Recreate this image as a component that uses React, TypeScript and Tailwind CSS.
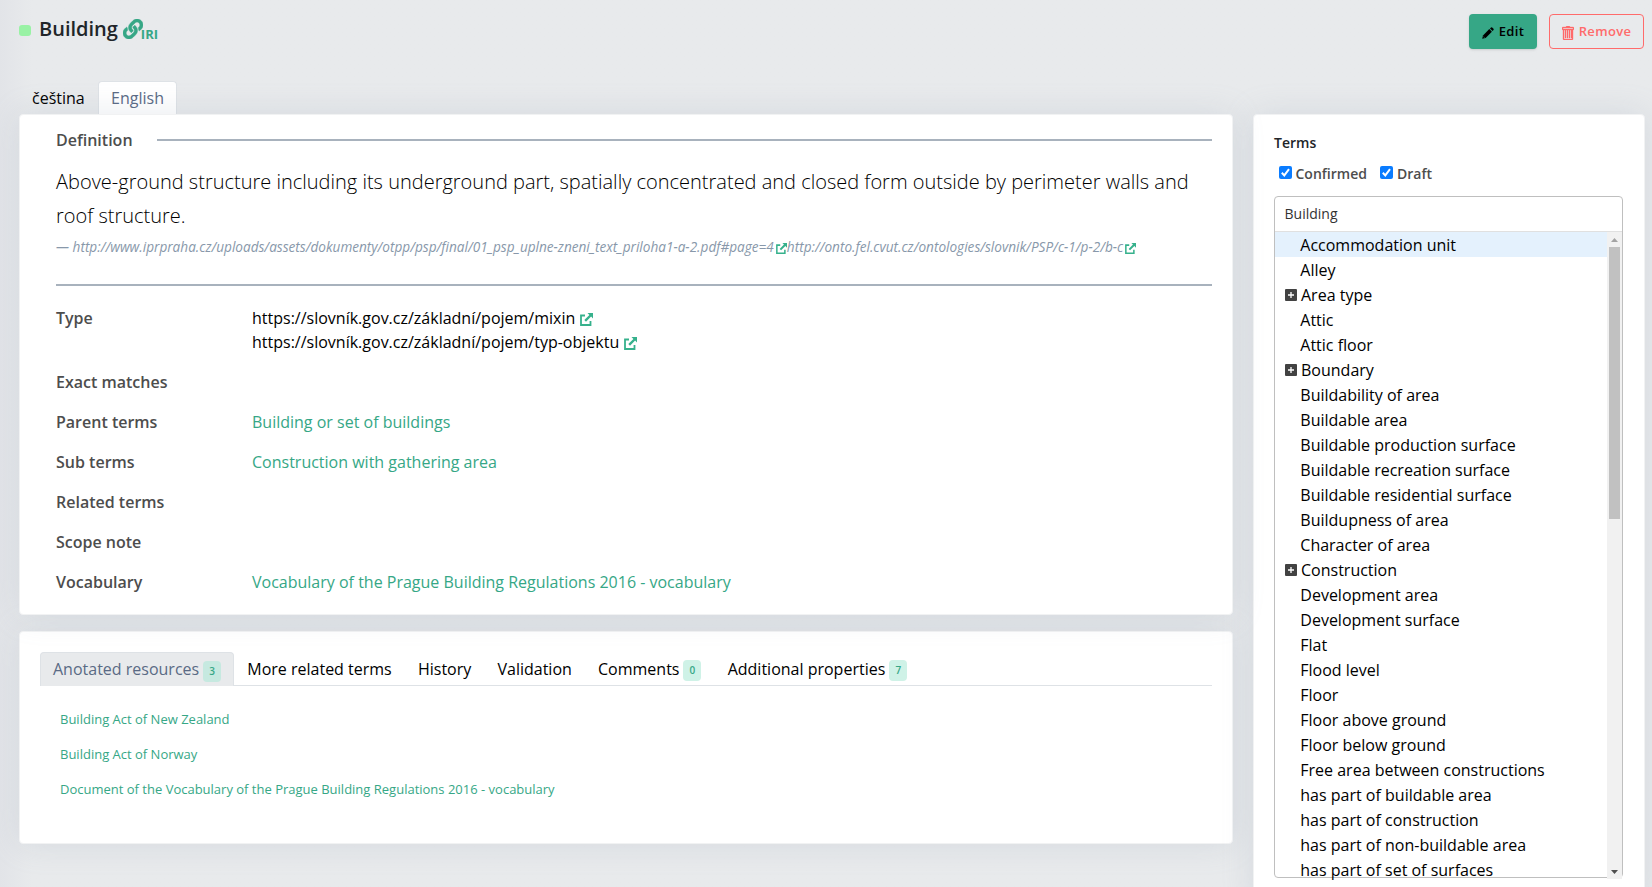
import React from "react";
import { FaLink } from "react-icons/fa";

const shadow =
  "border border-[#f1f2f3] bg-white rounded-[4px] shadow-[0_0_32px_rgba(136,152,170,0.2)]";

function External({ size = 13 }: { size?: number }) {
  return (
    <svg width={size} height={size} viewBox="0 0 13 13" className="ml-px inline-block align-[-2px]" aria-hidden="true">
      <path d="M5 2.500H1V12h9.500V8" fill="none" stroke="#36b18c" strokeWidth="1.800" />
      <path d="M7.500 0H13v5.500l-1.900-1.900L6 8.700 4.300 7 9.400 1.900z" fill="#36b18c" />
    </svg>
  );
}

function Pencil() {
  return (
    <svg width="12" height="12" viewBox="0 0 12 12" className="mt-[3px]" aria-hidden="true">
      <path fill="currentColor" d="M1 8.400 7.300 2.100 9.900 4.700 3.600 11 .2 11.800z" />
      <path fill="currentColor" d="M8 1.400 9 .500q.6-.5 1.200 0l1.300 1.300q.5.6 0 1.200l-.9 1z" />
      <path d="M1.600 9.700l.8.800" stroke="#36a786" strokeWidth=".8" />
    </svg>
  );
}

function Trash() {
  return (
    <svg width="12" height="14" viewBox="0 0 12 14" className="mt-[2px]" aria-hidden="true">
      <path
        fill="currentColor"
        stroke="currentColor"
        strokeWidth=".35"
        fillRule="evenodd"
        d="M11 1H8c0-.55-.45-1-1-1H5c-.55 0-1 .45-1 1H1c-.55 0-1 .45-1 1v1c0 .55.45 1 1 1v9c0 .55.45 1 1 1h8c.55 0 1-.45 1-1V4c.55 0 1-.45 1-1V2c0-.55-.45-1-1-1zm-1 12H2V4h1v8h1V4h1v8h1V4h1v8h1V4h1v8h1v1zm1-10H1V2h10v1z"
      />
    </svg>
  );
}

function Plus() {
  return (
    <svg width="12" height="12" viewBox="0 0 12 12" className="mr-1 shrink-0" aria-hidden="true">
      <rect width="12" height="12" rx="1" fill="#424242" />
      <path d="M6 3v6M3 6h6" stroke="#fff" strokeWidth="1.300" />
    </svg>
  );
}

const terms = [
  "Accommodation unit", "Alley", "+Area type", "Attic", "Attic floor", "+Boundary", "Buildability of area",
  "Buildable area", "Buildable production surface", "Buildable recreation surface", "Buildable residential surface",
  "Buildupness of area", "Character of area", "+Construction", "Development area", "Development surface", "Flat",
  "Flood level", "Floor", "Floor above ground", "Floor below ground", "Free area between constructions",
  "has part of buildable area", "has part of construction", "has part of non-buildable area", "has part of set of surfaces",
];

const rows: [string, string][] = [
  ["Exact matches", ""],
  ["Parent terms", "Building or set of buildings"],
  ["Sub terms", "Construction with gathering area"],
  ["Related terms", ""],
  ["Scope note", ""],
  ["Vocabulary", "Vocabulary of the Prague Building Regulations 2016 - vocabulary"],
];

const tabs: [string, string][] = [
  ["Anotated resources", "3"], ["More related terms", ""], ["History", ""], ["Validation", ""],
  ["Comments", "0"], ["Additional properties", "7"],
];

const docs = [
  "Building Act of New Zealand",
  "Building Act of Norway",
  "Document of the Vocabulary of the Prague Building Regulations 2016 - vocabulary",
];

function Header() {
  return (
    <header className="flex h-[81px] items-start justify-between pr-2 pl-[19px]">
      <div className="flex items-start pt-[14px]">
        <span className="mt-[11px] mr-[8px] h-[11px] w-3 rounded-[3px] bg-[#99f2a5]" />
        <h1 className="text-[20px] leading-[30px] font-semibold text-[#212529]">Building</h1>
        <FaLink size={20} stroke="currentColor" strokeWidth={12} className="mt-[5px] ml-[5px] text-[#36a786]" />
        <span className="mt-[9px] -ml-[2px] text-[13px] leading-[22px] font-bold text-[#36a786]">IRI</span>
      </div>
      <div className="flex gap-3 pt-[14px] text-[13px] font-semibold tracking-[0.32px]">
        <button className="flex h-[35px] w-[68px] items-center justify-center gap-[5px] rounded-[4px] bg-[#36a786] text-black shadow-sm">
          <Pencil />Edit
        </button>
        <button className="flex h-[35px] w-[95px] items-center justify-center gap-[5px] rounded-[4px] border border-[#ff6b6b] text-[#ff6b6b]">
          <Trash />Remove
        </button>
      </div>
    </header>
  );
}

function Detail() {
  return (
    <section className={"relative h-[501px] px-[36px] pt-[13px] " + shadow}>
      <div className="-mr-4 flex h-6 items-center gap-[24px] font-semibold">
        <span className="text-[#4d4d4d]">Definition</span>
        <span className="h-[2px] grow bg-[#a8b2bd]" />
      </div>
      <p className="mt-[13px] text-[20px] leading-[34px] font-light text-black">
        Above-ground structure including its underground part, spatially concentrated and closed form outside by perimeter walls and roof structure.
      </p>
      <p className="mt-[4px] mb-[27px] h-[20px] text-[13.6px] leading-[20px] whitespace-nowrap text-[#8898aa] italic">
        — http://www.iprpraha.cz/uploads/assets/dokumenty/otpp/psp/final/01_psp_uplne-zneni_text_priloha1-a-2.pdf#page=4
        <span className="ml-[1px]"><External size={11} /></span>
        http://onto.fel.cvut.cz/ontologies/slovnik/PSP/c-1/p-2/b-c
        <span className="ml-[1px]"><External size={11} /></span>
      </p>
      <div className="-mr-4 h-[2px] bg-[#a8b2bd]" />
      <div className="mt-[20px] flex h-[48px] leading-6">
        <span className="w-[196px] font-semibold text-[#4d4d4d]">Type</span>
        <div className="text-black">
          <div>https://slovník.gov.cz/základní/pojem/mixin <External /></div>
          <div>https://slovník.gov.cz/základní/pojem/typ-objektu <External /></div>
        </div>
      </div>
      {rows.map(([k, v]) => (
        <div key={k} className="flex h-10 items-end leading-6">
          <span className="w-[196px] font-semibold text-[#4d4d4d]">{k}</span>
          <a className="text-[#36a786]">{v}</a>
        </div>
      ))}
    </section>
  );
}

function Resources() {
  return (
    <section className={"mt-4 h-[213px] px-5 pt-5 " + shadow}>
      <nav className="flex h-[34px] items-stretch border-b border-[#dee2e6]">
        {tabs.map(([name, n], i) => (
          <div
            key={name}
            className={
              i === 0
                ? "-mb-px flex items-center rounded-t-[4px] border border-b-0 border-[#dee2e6] bg-[#e8eaec] px-3 pb-px text-[#5a6a85]"
                : "flex items-center border-x border-transparent px-[12.1px] pt-px text-black"
            }
          >
            {name}
            {n && (
              <span
                className={
                  "ml-[4px] flex h-[21px] w-[18px] items-center justify-center rounded-[4px] text-[10px] font-semibold text-[#36a786] " +
                  (i === 0 ? "mt-[4px] bg-[#c6e9e0]" : "mt-[3px] bg-[#cff2e7]")
                }
              >
                {n}
              </span>
            )}
          </div>
        ))}
      </nav>
      <ul className="pt-[16px] pl-5 text-[13px] text-[#36a786]">
        {docs.map((d) => (
          <li key={d} className="flex h-[35px] items-center">{d}</li>
        ))}
      </ul>
    </section>
  );
}

function Terms() {
  return (
    <aside className={"h-[790px] w-[392px] shrink-0 px-5 pt-[15px] " + shadow}>
      <h2 className="text-[14px] leading-[26px] font-semibold text-[#212529]">Terms</h2>
      <div className="mt-[5px] mb-[11px] flex h-[24px] items-center pl-[5px] text-[14px] font-semibold text-[#4d4d4d]">
        {["Confirmed", "Draft"].map((l) => (
          <label key={l} className="mr-[13.5px] flex items-center gap-[3.5px]">
            <svg width="13" height="13" viewBox="0 0 13 13" className="mb-[2px]" aria-hidden="true">
              <rect width="13" height="13" rx="2" fill="#0a7cff" />
              <path d="M2.800 6.800l2.500 2.600 4.700-6.200" stroke="#fff" strokeWidth="2" fill="none" />
            </svg>
            {l}
          </label>
        ))}
      </div>
      <div className="h-[682px] w-[349px] rounded-[4px] border border-[#bfbfbf] bg-white">
        <div className="flex h-[35px] items-center border-b border-[#e0e0e0] pb-[2px] pl-[9.5px] text-[14px] text-[#333333]">Building</div>
        <div className="flex h-[647px]">
          <ul className="grow text-black">
            {terms.map((t, i) => {
              const open = t[0] === "+";
              return (
                <li
                  key={t}
                  className={
                    (i === 0 ? "bg-[#e4f1fd] " : "") + "flex h-[25px] items-center leading-[25px] " + (open ? "pl-[10px]" : "pl-[25.3px]")
                  }
                >
                  {open && <Plus />}
                  <span className="pt-[2px]">{open ? t.slice(1) : t}</span>
                </li>
              );
            })}
          </ul>
          <div className="flex w-[15px] shrink-0 flex-col items-center justify-between bg-[#f1f1f1]">
            <div className="flex flex-col items-center">
              <svg width="15" height="15" viewBox="0 0 15 15" aria-hidden="true"><path d="M4 10h7L7.500 6z" fill="#a3a3a3" /></svg>
              <div className="h-[272px] w-[11px] bg-[#c1c1c1]" />
            </div>
            <svg width="15" height="15" viewBox="0 0 15 15" aria-hidden="true"><path d="M4 6h7L7.500 10z" fill="#505050" /></svg>
          </div>
        </div>
      </div>
    </aside>
  );
}

export default function App() {
  return (
    <div className="h-[887px] overflow-hidden bg-[#e8eaec] bg-gradient-to-r from-[#e2e4e8] to-[#e8eaec] to-[32px] font-['Open_Sans',sans-serif] text-[16px]">
      <Header />
      <div className="flex h-[33px] pl-[19px]">
        <div className="flex w-[79px] items-center pl-[13px] text-black">čeština</div>
        <div className="flex w-[79px] items-center justify-center rounded-t-[4px] border border-b-0 border-[#dee2e6] bg-white text-[#5a6a85]">English</div>
      </div>
      <div className="flex items-start gap-5 pl-[19px]">
        <main className="w-[1214px] shrink-0">
          <Detail />
          <Resources />
        </main>
        <Terms />
      </div>
    </div>
  );
}
